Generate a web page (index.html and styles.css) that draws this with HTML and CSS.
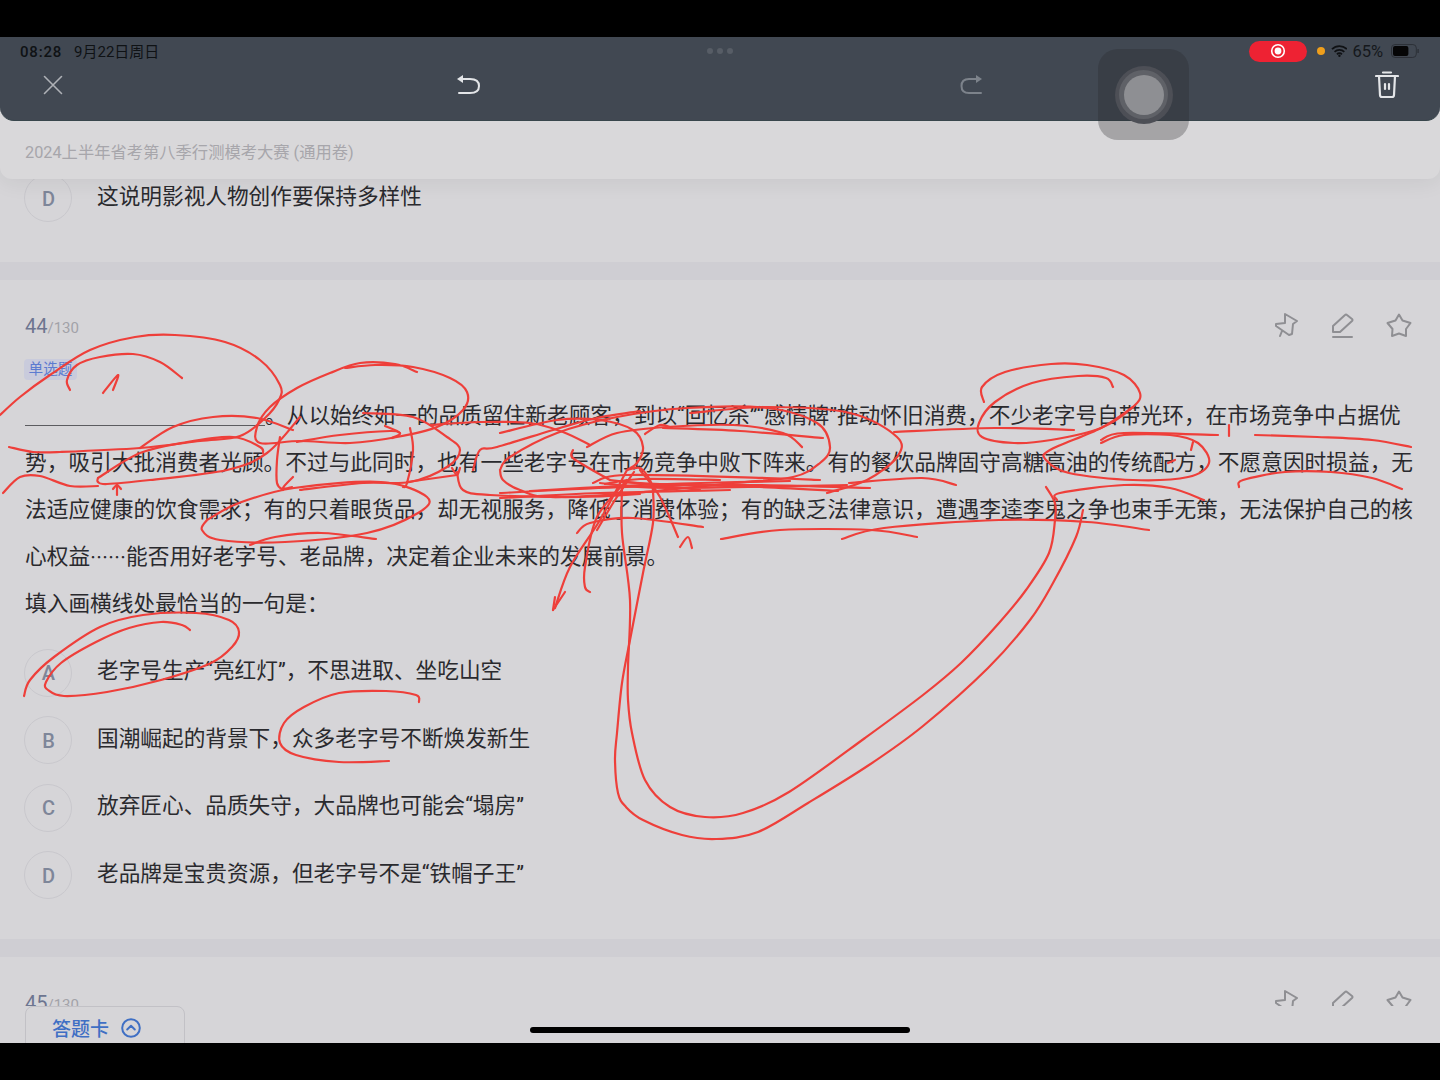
FILE: index.html
```html
<!DOCTYPE html>
<html lang="zh-CN">
<head>
<meta charset="utf-8">
<title>2024上半年省考第八季行测模考大赛</title>
<link rel="stylesheet" href="styles.css">
</head>
<body>
<div class="screen">
  <header class="toolbar">
    <div class="status">
      <div class="status-left"><span class="time">08:28</span><span>9月22日周日</span></div>
      <div class="dots"><i></i><i></i><i></i></div>
      <div class="status-right">
        <span class="rec"><svg width="16" height="16" viewBox="0 0 16 16"><circle cx="8" cy="8" r="6.3" fill="none" stroke="#fff" stroke-width="1.6"/><circle cx="8" cy="8" r="3.4" fill="#fff"/></svg></span>
        <span class="orange"></span>
        <svg class="wifi" width="17" height="12" viewBox="0 0 17 12"><path d="M1 4.2a10.6 10.6 0 0 1 15 0M3.6 6.9a7 7 0 0 1 9.8 0M6 9.3a3.4 3.4 0 0 1 5 0" fill="none" stroke="#0f1114" stroke-width="1.8"/><circle cx="8.5" cy="10.8" r="1.2" fill="#0f1114"/></svg>
        <span class="pct">65%</span>
        <svg class="battery" width="29" height="14" viewBox="0 0 29 14"><rect x="0.5" y="0.5" width="25" height="13" rx="3.5" fill="none" stroke="#2c3037"/><rect x="2" y="2" width="15.5" height="10" rx="2" fill="#050506"/><path d="M27.3 5v4" stroke="#2c3037" stroke-width="1.4"/></svg>
      </div>
    </div>
    <div class="tools">
      <svg class="ic-close" width="24" height="24" viewBox="0 0 24 24"><path d="M3.5 3.5l17 17M20.500 3.500l-17 17"/></svg>
      <div class="history">
        <svg class="ic-undo" width="24" height="24" viewBox="0 0 24 24"><path class="line" d="M7 6H14Q23 6 23 13Q23 20 14 20H3"/><path class="head" d="M1 6L7 2V10Z"/></svg>
        <svg class="ic-redo" width="24" height="24" viewBox="0 0 24 24"><path class="line" d="M17 6H10Q2.500 6 2.500 13Q2.500 20 10 20H22"/><path class="head" d="M23 6L17 2V10Z"/></svg>
      </div>
      <svg class="ic-trash" width="24" height="28" viewBox="0 0 24 28"><path d="M1 5H23M8 1.500H16M4 5L5 24Q5 26 7 26H17Q19 26 19 24L20 5M10 13V18M14 13V18"/></svg>
    </div>
  </header>

  <div class="subbar">2024上半年省考第八季行测模考大赛 (通用卷)</div>

  <main class="scroll">
    <section class="prev">
      <div class="option"><span class="letter">D</span><span class="otext">这说明影视人物创作要保持多样性</span></div>
    </section>
    <div class="band"></div>
    <section class="card">
      <div class="qhead">
        <div class="qnum"><b>44</b>/130</div>
        <div class="qicons">
          <svg viewBox="0 0 30 30"><path d="M13 2L25 9L21 12L20 22L17 23L4 14L4 12L13 11ZM10 19L8 24"/></svg>
          <svg viewBox="0 0 30 30"><path d="M4 20V14L16 3Q17 2 18 3L23 7Q24 8 23 9L11 20ZM4 25H23"/></svg>
          <svg viewBox="0 0 30 30"><path d="M14 2.500L17.500 8.500L25.500 11L21 17L21 24L14 21.500L7 24L7.500 17L2.500 11L10.500 8.500Z"/></svg>
        </div>
      </div>
      <div class="tag">单选题</div>
      <p class="stem"><span class="blank"></span>。从以始终如一的品质留住新老顾客，到以“回忆杀”“感情牌”推动怀旧消费，不少老字号自带光环，在市场竞争中占据优势，吸引大批消费者光顾。不过与此同时，也有一些老字号在市场竞争中败下阵来。有的餐饮品牌固守高糖高油的传统配方，不愿意因时损益，无法适应健康的饮食需求；有的只着眼货品，却无视服务，降低了消费体验；有的缺乏法律意识，遭遇李逵李鬼之争也束手无策，无法保护自己的核心权益<span class="ellipsis">……</span>能否用好老字号、老品牌，决定着企业未来的发展前景。</p>
      <p class="stem">填入画横线处最恰当的一句是：</p>
      <div class="options">
        <div class="option"><span class="letter">A</span><span class="otext">老字号生产“亮红灯”，不思进取、坐吃山空</span></div>
        <div class="option"><span class="letter">B</span><span class="otext">国潮崛起的背景下，众多老字号不断焕发新生</span></div>
        <div class="option"><span class="letter">C</span><span class="otext">放弃匠心、品质失守，大品牌也可能会“塌房”</span></div>
        <div class="option"><span class="letter">D</span><span class="otext">老品牌是宝贵资源，但老字号不是“铁帽子王”</span></div>
      </div>
    </section>
    <div class="band"></div>
    <section class="card">
      <div class="qhead">
        <div class="qnum"><b>45</b>/130</div>
        <div class="qicons">
          <svg viewBox="0 0 30 30"><path d="M13 2L25 9L21 12L20 22L17 23L4 14L4 12L13 11ZM10 19L8 24"/></svg>
          <svg viewBox="0 0 30 30"><path d="M4 20V14L16 3Q17 2 18 3L23 7Q24 8 23 9L11 20ZM4 25H23"/></svg>
          <svg viewBox="0 0 30 30"><path d="M14 2.500L17.500 8.500L25.500 11L21 17L21 24L14 21.500L7 24L7.500 17L2.500 11L10.500 8.500Z"/></svg>
        </div>
      </div>
    </section>
  </main>

  <footer class="footer">
    <div class="sheet">答题卡
      <svg width="20" height="20" viewBox="0 0 20 20"><circle cx="10" cy="10" r="8.800"/><path d="M6.200 11.500L10 7.800L13.800 11.500"/></svg>
    </div>
  </footer>

  <div class="assist"><span class="ring"><span class="ring-mid"><span class="ring-core"></span></span></span></div>
  <div class="home"></div>
</div>
<svg id="ink" class="ink" width="1440" height="1080" viewBox="0 0 1440 1080"></svg>
<script src="script.js"></script>
</body>
</html>
```

FILE: styles.css
```css
* { box-sizing: border-box; }
html, body { margin: 0; height: 100%; }
body {
  background: #000;
  overflow: hidden;
  position: relative;
  font-family: Roboto, "Noto Sans CJK SC", sans-serif;
  color: #2a2a2e;
}
.screen {
  position: relative;
  margin-top: 37px;
  height: 1006px;
  display: flex;
  flex-direction: column;
  background: #d6d5d8;
  overflow: hidden;
}

/* toolbar */
.toolbar {
  position: relative;
  z-index: 3;
  height: 84px;
  flex: none;
  background: #414852;
  border-radius: 0 0 14px 14px;
  border-bottom: 1px solid #38464c;
}
.status {
  height: 28px;
  padding: 0 20px;
  display: flex;
  align-items: center;
  justify-content: space-between;
  font-size: 15px;
  color: #0f1215;
}
.status-left, .status-right { width: 171px; display: flex; align-items: center; }
.status-left { gap: 12px; padding-bottom: 2px; white-space: nowrap; align-items: baseline; }
.time { letter-spacing: .8px; font-weight: 500; }
.dots { display: flex; gap: 4px; }
.dots i { width: 6px; height: 6px; border-radius: 50%; background: #575d66; }
.rec {
  width: 58px;
  height: 21px;
  border-radius: 11px;
  background: #ee2233;
  display: flex;
  align-items: center;
  justify-content: center;
}
.orange { width: 8px; height: 8px; border-radius: 50%; background: #ef9f1c; margin-left: 10px; }
.wifi { margin-left: 6px; }
.pct { margin-left: 5px; width: 32px; font-size: 16.500px; color: #15181c; white-space: nowrap; }
.battery { margin-left: 7px; }
.tools {
  height: 40px;
  padding: 0 41px;
  display: flex;
  align-items: center;
  justify-content: space-between;
}
.history { width: 527px; margin-right: 2px; display: flex; justify-content: space-between; }
.tools svg { fill: none; stroke-linecap: round; stroke-linejoin: round; }
.ic-close { stroke: #aeb1b6; stroke-width: 1.600; }
.ic-undo .line { stroke: #e3e5e8; stroke-width: 2; }
.ic-undo .head { fill: #e3e5e8; }
.ic-redo .line { stroke: #7d838b; stroke-width: 2; }
.ic-redo .head { fill: #7d838b; }
.ic-trash { stroke: #e3e5e8; stroke-width: 2.200; }

.subbar {
  position: relative;
  z-index: 2;
  flex: none;
  height: 72px;
  margin-top: -14px;
  padding: 16px 25px 0;
  display: flex;
  align-items: center;
  font-size: 16.300px;
  color: #a7a6ab;
  background: #d9d8da;
  border-radius: 0 0 12px 12px;
  box-shadow: 0 3px 22px rgba(0, 0, 0, .07);
}

/* scroll region */
.scroll {
  flex: 1;
  min-height: 0;
  margin-top: -10px;
  overflow: hidden;
}
.prev { height: 93px; padding: 5px 24px 0; }
.prev .otext { padding-bottom: 3px; }
.band { height: 18px; background: #cfced3; }
.card { padding: 32px 25px 39.500px; }
.qhead { display: flex; justify-content: space-between; height: 30px; }
.qnum { font-size: 15px; line-height: 28px; color: #a2a2a8; }
.qnum b { font-size: 20px; font-weight: 400; color: #6d7590; }
.qicons { display: flex; gap: 26.500px; }
.qicons svg {
  width: 30px;
  height: 30px;
  fill: none;
  stroke: #8f8f93;
  stroke-width: 2;
  stroke-linecap: round;
  stroke-linejoin: round;
}
.tag {
  width: 53px;
  height: 21px;
  margin: 17px 0 0 -1px;
  border-radius: 4px;
  background: #c9cbdc;
  color: #5c7bd0;
  font-size: 14.600px;
  line-height: 21px;
  text-align: center;
}
.stem {
  margin: 0;
  font-size: 21.700px;
  line-height: 47px;
}
.tag + .stem { margin-top: 12px; }
.blank {
  display: inline-block;
  width: 240px;
  height: 1.500px;
  vertical-align: -3px;
  background: #5c5c60;
}
.ellipsis {
  font-family: "Noto Sans CJK SC", sans-serif;
  font-size: 18px;
  line-height: 1;
}
.options {
  margin-top: 21.500px;
  margin-left: -1px;
  display: flex;
  flex-direction: column;
  gap: 19.500px;
}
.option { display: flex; align-items: center; gap: 25px; height: 48px; }
.letter {
  width: 48px;
  height: 48px;
  flex: none;
  padding: 1px 0 0 1px;
  border: 1px solid #c9c8cd;
  border-radius: 50%;
  display: flex;
  align-items: center;
  justify-content: center;
  font-size: 20px;
  font-weight: 500;
  color: #7e8699;
}
.otext { font-size: 21.670px; line-height: 30px; padding-bottom: 3px; white-space: nowrap; }

/* footer */
.footer {
  position: relative;
  z-index: 2;
  flex: none;
  height: 37px;
  padding-left: 25px;
  background: #d6d5d8;
}
.sheet {
  width: 160px;
  height: 38px;
  padding: 5px 0 0 26px;
  display: flex;
  align-items: center;
  gap: 12px;
  border: 1px solid #c2c1c6;
  border-radius: 8px 8px 0 0;
  color: #3f6fc4;
  font-size: 19px;
  font-weight: 500;
  white-space: nowrap;
}
.sheet svg { fill: none; stroke: #3f6fc4; stroke-width: 2; stroke-linecap: round; stroke-linejoin: round; }

/* floating overlays */
.assist {
  position: absolute;
  z-index: 4;
  top: 12px;
  left: 1098px;
  width: 91px;
  height: 91px;
  border-radius: 20px;
  background: rgba(38, 38, 40, .29);
  display: flex;
  align-items: center;
  justify-content: center;
}
.ring { width: 58px; height: 58px; border-radius: 50%; background: #4d4f56; display: flex; align-items: center; justify-content: center; }
.ring-mid { width: 49px; height: 49px; border-radius: 50%; background: #5f6167; display: flex; align-items: center; justify-content: center; }
.ring-core { width: 40px; height: 40px; border-radius: 50%; background: #8e8f93; }
.home {
  position: absolute;
  z-index: 5;
  left: 530px;
  top: 990px;
  width: 380px;
  height: 6px;
  border-radius: 3px;
  background: #000;
}
.ink {
  position: absolute;
  z-index: 6;
  top: 0;
  left: 0;
  pointer-events: none;
  fill: none;
  stroke: #ee3f3a;
  stroke-width: 2.200;
  stroke-linecap: round;
  stroke-linejoin: round;
}
```

FILE: script.js
```js
var strokes = [
  [0,415,20,397,50,375,90,350,135,337,175,335,225,342,260,360,280,385,279,400,265,418,240,436,200,441,140,448,60,452,33,452,9,447],
  [70,390,67,380,77,365,100,357,133,354,160,362,182,378],
  [103,393,118,375,113,390],
  [140,448,173,427,213,417,257,418,293,430],
  [98,478,140,453,187,442,233,437,260,447,263,453],
  [98,478,98,482,107,484,150,480,227,470,267,453,300,417],
  [3,493,20,477,40,476,70,486,98,486],
  [117,485,117,495],[113,489,117,485,121,489],
  [417,372,395,364,360,363,330,373,297,388,270,407,257,427,260,443,300,441,350,443,397,437,437,427,463,410,467,392,450,378,413,367,375,365,345,368],
  [297,442,340,435,390,431,400,433],[385,426,400,433,392,438],
  [280,437,277,460,277,483,283,490],[293,477,283,488,292,487],
  [410,428,413,450,407,483,403,487],
  [363,413,413,417,447,437,460,450,447,467,410,482,363,483,300,490],
  [430,425,480,422,530,423,563,432,590,445],
  [207,520,239,503,294,488,381,482,427,497,418,513,367,533,285,542,220,540,202,530,207,520],
  [250,545,275,537,321,533,376,539],
  [457,472,463,490,490,495,580,497,640,494],
  [407,482,457,475],[452,468,457,475,460,468],
  [473,470,480,450,497,447,563,427,597,418,640,411],
  [500,470,510,457,557,433,617,417,687,408,767,408,817,423,830,447,820,463,793,477,733,483,633,493,550,497,520,490,503,480,500,470],
  [587,447,617,433,667,427,733,425,783,433,802,447],
  [500,433,557,420,600,420,633,430,643,447,637,463,627,470],
  [573,450,572,457,587,467,610,480],
  [645,434,660,425,672,428],[663,428,740,431,823,438],
  [690,413,767,407,850,413,897,437,897,457,867,480,827,493],
  [500,493,627,487,750,485,870,488],
  [500,498,600,493,730,490],
  [530,491,620,486,700,483,790,481],
  [593,483,627,475,767,478,820,480],
  [600,483,667,488,847,485],
  [610,480,700,490],
  [605,484,640,479,720,480],
  [620,482,660,484,760,487,838,491],
  [849,483,922,478,956,485],
  [627,470,640,468,650,480,653,490],
  [627,470,600,520,570,567,555,608],[553,610,565,592],[553,610,555,597],
  [634,472,615,500,597,530],
  [627,480,597,517,585,567,585,587,590,592],
  [640,470,660,497,678,537],
  [680,547,688,537,692,548],
  [577,533,590,523,633,518,703,527],
  [622,487,622,533,630,600,628,667,628,700,632,733,645,780,670,807,705,817,743,813,789,792,865,738,923,695,961,663,999,623,1026,590,1049,553,1055,520,1055,503,1046,487],
  [653,490,653,523,643,573,630,640,622,683,617,733,615,760,618,793,626,807,643,820,682,835,716,839,758,832,808,803,869,765,923,726,988,668,1030,620,1053,583,1076,537,1083,510],
  [1057,500,1060,493,1124,485,1170,488,1204,500],
  [721,539,780,530,871,530,917,537],
  [842,539,884,528,999,520,1087,522,1149,530],
  [1113,387,1106,378,1078,376,1032,383,995,402,979,423,982,437,1014,443,1051,440,1101,428,1133,407,1140,393,1124,375,1087,365,1051,364,1005,372,982,387,984,402],
  [1133,407,1101,428,1050,450,1046,460,1069,473,1133,480,1188,477,1209,463,1198,443,1170,435,1124,435,1101,443],
  [1101,440,1124,433,1218,435],
  [894,432,995,428,1074,430],
  [1229,425,1229,436],
  [1255,435,1317,437,1372,440,1411,447],
  [1239,487,1243,480,1285,472,1331,472,1372,478,1402,489],
  [1168,463,1175,460],
  [1191,450,1193,442],
  [24,696,30,680,54,657,100,627,143,615,196,613,229,620,239,632,232,647,211,663,161,680,107,692,64,696,48,690,46,682,61,663,96,642,129,628,161,622,182,625,190,630],
  [419,702,416,695,386,691,339,693,304,707,284,723,280,743,296,755,339,762,389,761]
];

function smooth(p) {
  var n = p.length / 2;
  function x(i) { return p[2 * Math.max(0, Math.min(n - 1, i))]; }
  function y(i) { return p[2 * Math.max(0, Math.min(n - 1, i)) + 1]; }
  var d = 'M' + x(0) + ' ' + y(0);
  for (var i = 0; i < n - 1; i++) {
    d += 'C' + (x(i) + (x(i + 1) - x(i - 1)) / 6).toFixed(1) + ' ' +
      (y(i) + (y(i + 1) - y(i - 1)) / 6).toFixed(1) + ' ' +
      (x(i + 1) - (x(i + 2) - x(i)) / 6).toFixed(1) + ' ' +
      (y(i + 1) - (y(i + 2) - y(i)) / 6).toFixed(1) + ' ' +
      x(i + 1) + ' ' + y(i + 1);
  }
  return d;
}

var ink = document.getElementById('ink');
strokes.forEach(function (s) {
  var path = document.createElementNS('http://www.w3.org/2000/svg', 'path');
  path.setAttribute('d', smooth(s));
  ink.appendChild(path);
});
```
